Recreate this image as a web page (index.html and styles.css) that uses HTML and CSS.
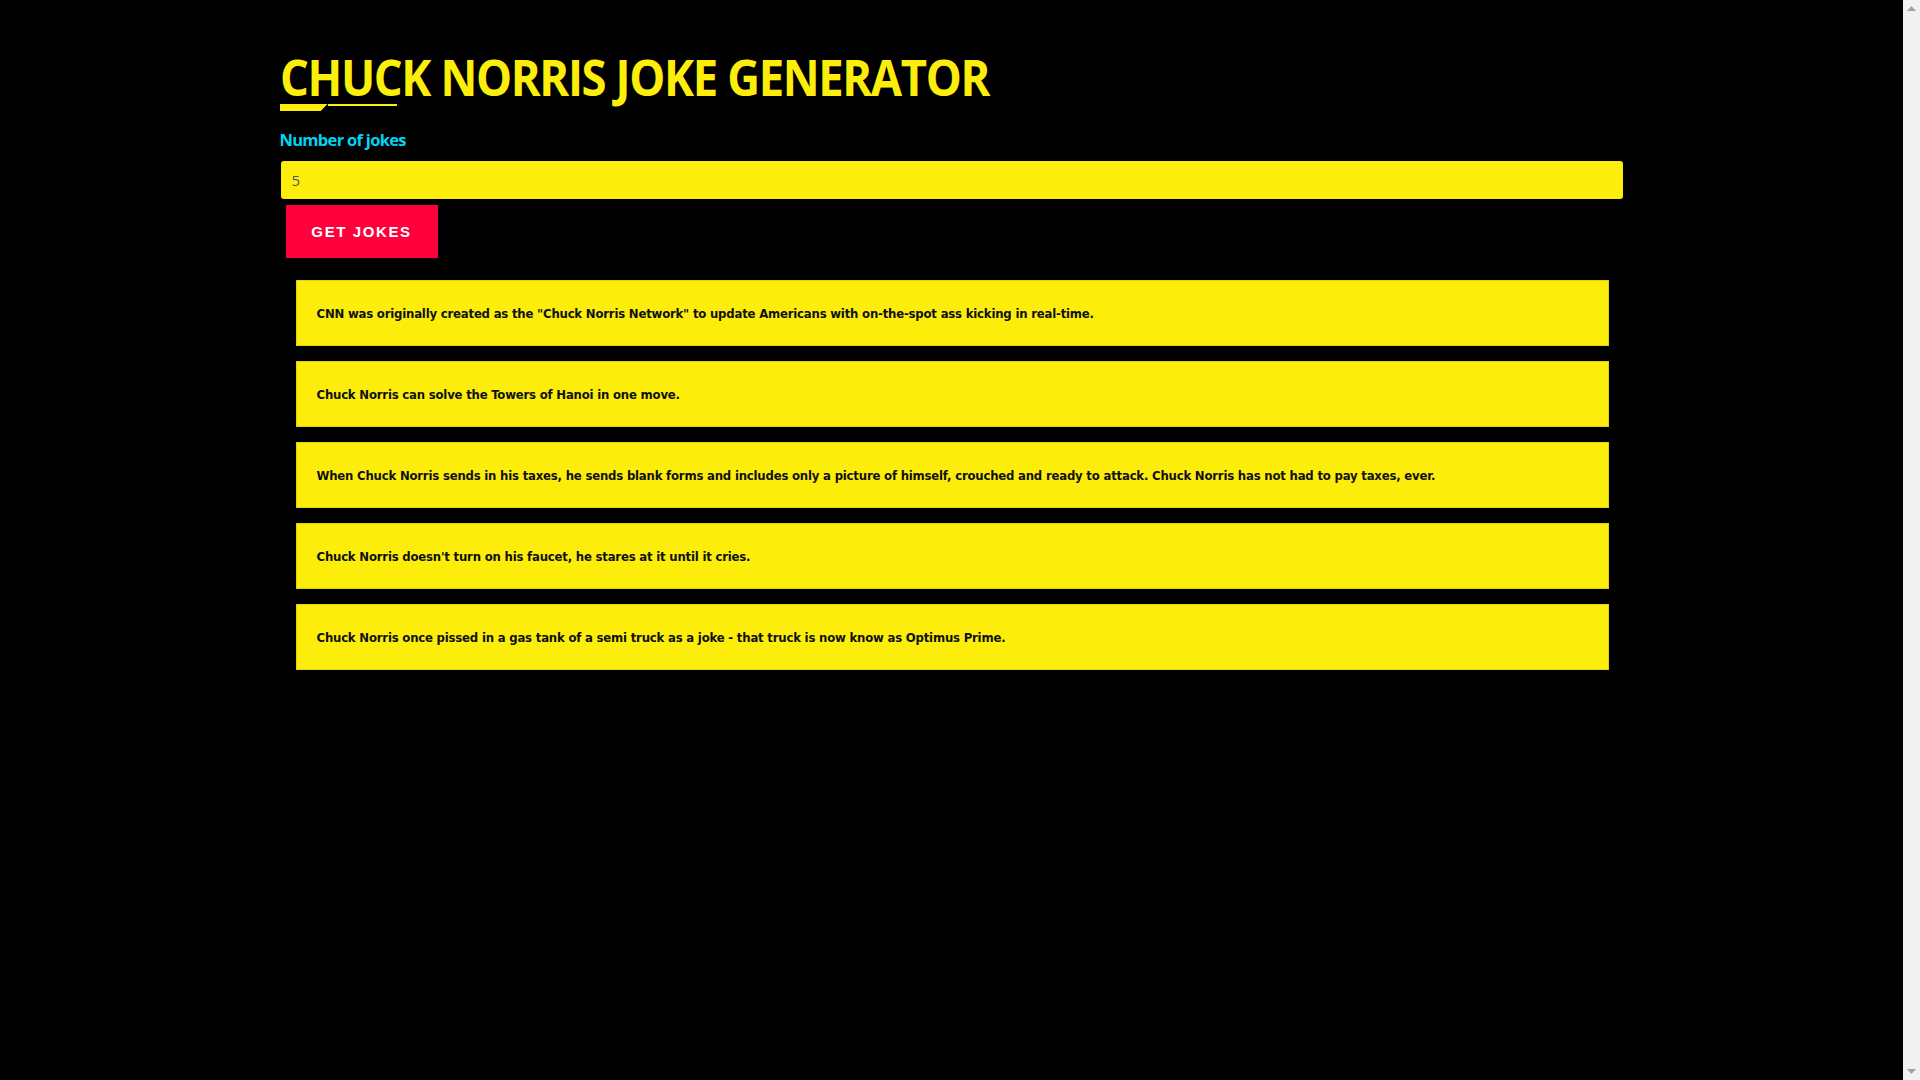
FILE: index.html
```html
<!DOCTYPE html>
<html lang="en">
<head>
<meta charset="utf-8">
<title>Chuck Norris Joke Generator</title>
<link rel="stylesheet" href="styles.css">
</head>
<body>
<div class="container">
  <h1 class="title">CHUCK NORRIS JOKE GENERATOR</h1>
  <div class="title-line"><span class="thick"></span><span class="thin"></span></div>
  <form class="form">
    <label class="label" for="number">Number of jokes</label>
    <input class="input" type="text" id="number" value="5">
    <button class="btn" type="button">GET JOKES</button>
  </form>
  <ul class="jokes">
    <li class="joke">CNN was originally created as the "Chuck Norris Network" to update Americans with on-the-spot ass kicking in real-time.</li>
    <li class="joke">Chuck Norris can solve the Towers of Hanoi in one move.</li>
    <li class="joke">When Chuck Norris sends in his taxes, he sends blank forms and includes only a picture of himself, crouched and ready to attack. Chuck Norris has not had to pay taxes, ever.</li>
    <li class="joke">Chuck Norris doesn't turn on his faucet, he stares at it until it cries.</li>
    <li class="joke">Chuck Norris once pissed in a gas tank of a semi truck as a joke - that truck is now know as Optimus Prime.</li>
  </ul>
</div>
<div class="scrollbar" aria-hidden="true">
  <svg class="arrow" width="9" height="5" viewBox="0 0 9 5"><polygon points="4.5,0 9,5 0,5" fill="#a3a3a3"/></svg>
  <svg class="arrow" width="9" height="5" viewBox="0 0 9 5"><polygon points="0,0 9,0 4.5,5" fill="#a3a3a3"/></svg>
</div>
</body>
</html>
```
FILE: styles.css
```css
body {
  margin: 0 17px 0 0;
  background: #000;
  font-family: "Open Sans", "Noto Sans", sans-serif;
  min-height: 100vh;
}
.scrollbar {
  position: fixed;
  top: 0;
  right: 0;
  bottom: 0;
  width: 17px;
  background: #f1f1f1;
  display: flex;
  flex-direction: column;
  justify-content: space-between;
  align-items: center;
  padding: 6px 0;
  box-sizing: border-box;
}
.arrow { display: block; }
.container {
  width: 1344px;
  margin: 0 auto;
  padding-top: 52px;
}
.title {
  margin: 0;
  color: #fcee0a;
  font-family: "Open Sans", sans-serif;
  font-weight: 700;
  font-size: 50px;
  line-height: 50px;
  letter-spacing: -1.5px;
  transform: scaleX(0.907);
  transform-origin: left center;
}
.title-line {
  display: flex;
  align-items: flex-start;
  margin-top: 2px;
  height: 7px;
}
.title-line .thick {
  width: 48px;
  height: 7px;
  background: #fcee0a;
  clip-path: polygon(0 0, 100% 0, 86% 100%, 0 100%);
}
.title-line .thin {
  width: 69px;
  height: 2px;
  background: #fcee0a;
}
.form {
  display: flex;
  flex-direction: column;
  align-items: flex-start;
  margin-top: 18px;
}
.label {
  color: #00d4f4;
  font-family: "Open Sans", sans-serif;
  font-weight: 700;
  font-size: 16.5px;
  line-height: 22px;
  letter-spacing: -0.7px;
}
.input {
  box-sizing: border-box;
  width: calc(100% - 2px);
  margin: 10px 0 0 1px;
  height: 38px;
  border: none;
  border-radius: 3px;
  background: #fcee0a;
  padding: 0 11px;
  font-family: "Open Sans", sans-serif;
  font-size: 15px;
  color: #555;
}
.btn {
  margin: 6px 0 0 6px;
  width: 152px;
  height: 53px;
  border: none;
  background: #ff003c;
  color: #fff;
  font-family: "Liberation Sans", Arial, sans-serif;
  font-weight: 700;
  font-size: 15px;
  letter-spacing: 1.6px;
  padding: 0;
}
.jokes {
  list-style: none;
  margin: 22px 15px 0 16px;
  padding: 0;
  display: flex;
  flex-direction: column;
  gap: 15px;
}
.joke {
  box-sizing: border-box;
  height: 66px;
  display: flex;
  align-items: center;
  padding: 0 20px;
  background: #fcee0a;
  border: 1px solid #e2d40c;
  color: #111;
  font-family: "DejaVu Sans Condensed", "DejaVu Sans", sans-serif;
  font-weight: 700;
  font-size: 13px;
  letter-spacing: -0.2px;
}
```
